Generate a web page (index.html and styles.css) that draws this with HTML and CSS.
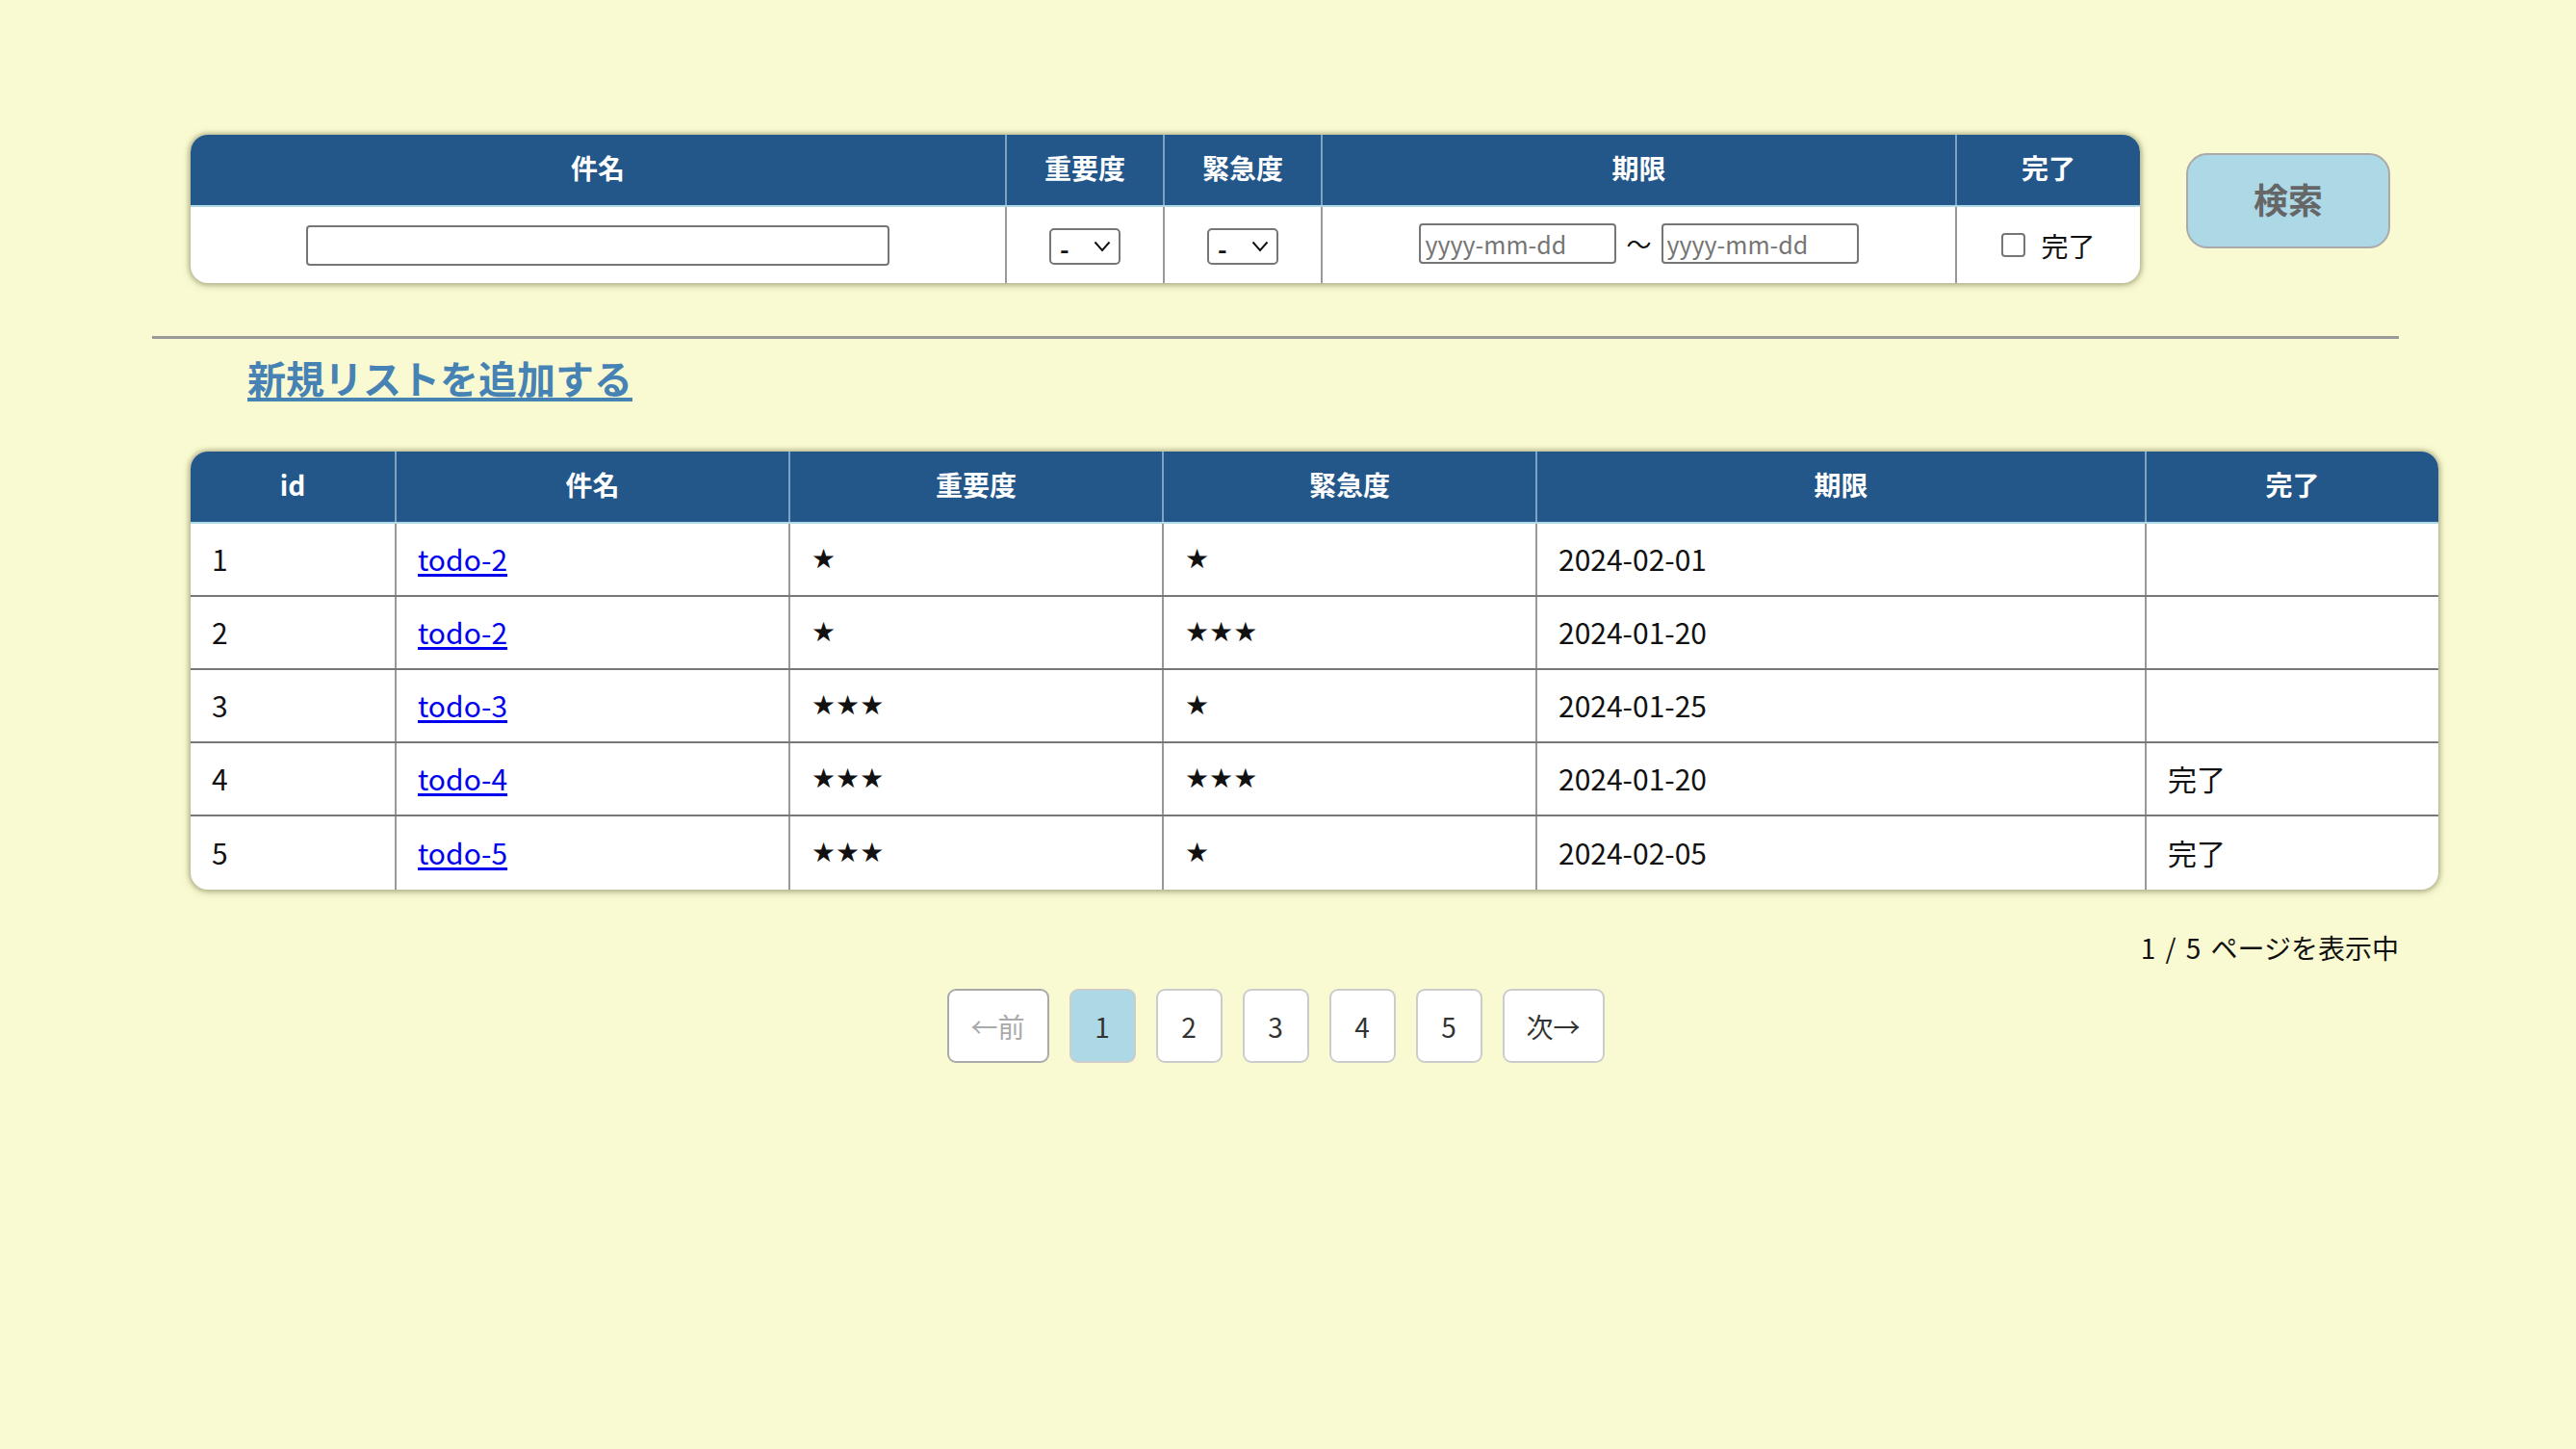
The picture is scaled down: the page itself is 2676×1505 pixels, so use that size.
FILE: index.html
```html
<!DOCTYPE html>
<html lang="ja">
<head>
<meta charset="utf-8">
<title>TODO</title>
<link rel="stylesheet" href="styles.css">
</head>
<body>
<div class="page">
  <form class="search">
    <div class="card search-card">
      <table class="grid search-table">
        <colgroup>
          <col class="c-s-name"><col class="c-s-imp"><col class="c-s-urg"><col class="c-s-date"><col class="c-s-done">
        </colgroup>
        <thead>
          <tr><th>件名</th><th>重要度</th><th>緊急度</th><th>期限</th><th>完了</th></tr>
        </thead>
        <tbody>
          <tr>
            <td class="center"><input class="text-in" type="text"></td>
            <td class="center">
              <span class="sel-wrap"><select class="sel"><option>-</option></select><svg class="chev" viewBox="0 0 18 12" width="18" height="12"><path d="M1.5 1.5 L9 10 L16.5 1.5" fill="none" stroke="#111" stroke-width="2"/></svg></span>
            </td>
            <td class="center">
              <span class="sel-wrap"><select class="sel"><option>-</option></select><svg class="chev" viewBox="0 0 18 12" width="18" height="12"><path d="M1.5 1.5 L9 10 L16.5 1.5" fill="none" stroke="#111" stroke-width="2"/></svg></span>
            </td>
            <td class="center">
              <div class="date-range">
                <input class="date-in" type="text" placeholder="yyyy-mm-dd">
                <span class="tilde">〜</span>
                <input class="date-in" type="text" placeholder="yyyy-mm-dd">
              </div>
            </td>
            <td class="center">
              <label class="check"><input class="cb" type="checkbox"><span>完了</span></label>
            </td>
          </tr>
        </tbody>
      </table>
    </div>
    <button class="search-btn" type="button">検索</button>
  </form>

  <hr class="rule">

  <a class="add-link" href="#">新規リストを追加する</a>

  <div class="card list-card">
    <table class="grid list-table">
      <colgroup>
        <col class="c-id"><col class="c-name"><col class="c-imp"><col class="c-urg"><col class="c-date"><col class="c-done">
      </colgroup>
      <thead>
        <tr><th>id</th><th>件名</th><th>重要度</th><th>緊急度</th><th>期限</th><th>完了</th></tr>
      </thead>
      <tbody>
        <tr><td>1</td><td><a href="#">todo-2</a></td><td class="stars">★</td><td class="stars">★</td><td>2024-02-01</td><td></td></tr>
        <tr><td>2</td><td><a href="#">todo-2</a></td><td class="stars">★</td><td class="stars">★★★</td><td>2024-01-20</td><td></td></tr>
        <tr><td>3</td><td><a href="#">todo-3</a></td><td class="stars">★★★</td><td class="stars">★</td><td>2024-01-25</td><td></td></tr>
        <tr><td>4</td><td><a href="#">todo-4</a></td><td class="stars">★★★</td><td class="stars">★★★</td><td>2024-01-20</td><td>完了</td></tr>
        <tr><td>5</td><td><a href="#">todo-5</a></td><td class="stars">★★★</td><td class="stars">★</td><td>2024-02-05</td><td>完了</td></tr>
      </tbody>
    </table>
  </div>

  <p class="page-info">1 / 5 ページを表示中</p>

  <nav class="pager">
    <span class="pg pg-wide pg-disabled">←前</span>
    <span class="pg pg-active">1</span>
    <a class="pg" href="#">2</a>
    <a class="pg" href="#">3</a>
    <a class="pg" href="#">4</a>
    <a class="pg" href="#">5</a>
    <a class="pg pg-wide" href="#">次→</a>
  </nav>
</div>
</body>
</html>
```

FILE: styles.css
```css
html, body {
  margin: 0;
  padding: 0;
}
body {
  background: #fafad2;
  font-family: "Noto Sans CJK JP", "Noto Sans", sans-serif;
  color: #111;
  width: 2676px;
  height: 1505px;
}
.page {
  width: 2334px;
  margin-left: 158px;
  padding-top: 140px;
}

/* ---------- cards / tables ---------- */
.card {
  border-radius: 18px;
  overflow: hidden;
  background: #fff;
  box-shadow: 0 0 4px 2px rgba(150, 150, 110, 0.55), 0 2px 10px rgba(120, 120, 80, 0.35);
}
.grid {
  border-collapse: collapse;
  table-layout: fixed;
  width: 100%;
}
.grid th {
  background: #235789;
  color: #fff;
  font-weight: bold;
  font-size: 28px;
  line-height: 36px;
  text-align: center;
  height: 68px;
  padding: 0 0 5px 0;
  border-right: 2px solid #7ea3c2;
  border-bottom: 2px solid #add8e6;
}
.grid th:last-child,
.grid td:last-child {
  border-right: none;
}
.grid td {
  font-size: 30px;
  padding: 0 0 2px 22px;
  border-right: 2px solid #999;
  border-bottom: 2px solid #777;
  height: 72px;
}
.grid tbody tr:last-child td {
  border-bottom: none;
  height: 74px;
}
.grid a {
  color: #0000ee;
  text-decoration: underline;
  text-underline-offset: 3px;
}
.grid td.stars {
  font-family: "DejaVu Sans", sans-serif;
  font-size: 28px;
}

/* ---------- search ---------- */
.search {
  display: flex;
  align-items: flex-start;
  margin: 0 0 0 40px;
}
.search-card {
  width: 2025px;
  flex: none;
}
.c-s-name { width: 847px; }
.c-s-imp { width: 164px; }
.c-s-urg { width: 164px; }
.c-s-date { width: 659px; }
.c-s-done { width: 191px; }
.search-table td {
  height: 79px;
  padding: 0;
  border-right: 2px solid #999;
}
.search-table tbody tr:last-child td {
  height: 79px;
}
.search-table td.center {
  text-align: center;
}
.text-in {
  box-sizing: border-box;
  width: 606px;
  height: 42px;
  border: 2px solid #767676;
  border-radius: 4px;
  background: #fff;
  font-size: 24px;
  vertical-align: middle;
  margin: 0 0 3px 0;
}
.sel-wrap {
  position: relative;
  display: inline-block;
  vertical-align: middle;
  margin-bottom: 3px;
}
.sel {
  appearance: none;
  -webkit-appearance: none;
  box-sizing: border-box;
  width: 74px;
  height: 38px;
  border: 2px solid #767676;
  border-radius: 5px;
  background: #fff;
  font-family: "Noto Sans CJK JP", sans-serif;
  font-size: 26px;
  font-weight: bold;
  padding: 0 0 2px 9px;
  color: #111;
  margin: 0;
  display: block;
}
.chev {
  position: absolute;
  right: 10px;
  top: 13px;
  pointer-events: none;
}
.date-range {
  display: flex;
  justify-content: center;
  align-items: center;
  gap: 10px;
  margin-bottom: 3px;
}
.date-in {
  box-sizing: border-box;
  width: 205px;
  height: 42px;
  border: 2px solid #767676;
  border-radius: 4px;
  background: #fff;
  font-family: "Noto Sans CJK JP", sans-serif;
  font-size: 25px;
  padding: 0 4px;
  margin: 0;
}
.date-in::placeholder {
  color: #757575;
}
.tilde {
  font-size: 26px;
  line-height: 1;
}
.check {
  display: inline-flex;
  align-items: center;
  gap: 16px;
  font-size: 28px;
  vertical-align: middle;
  margin-bottom: 4px;
}
.cb {
  appearance: none;
  -webkit-appearance: none;
  box-sizing: border-box;
  width: 25px;
  height: 25px;
  border: 2px solid #767676;
  border-radius: 4px;
  background: #fff;
  margin: 0;
}
.search-btn {
  flex: none;
  box-sizing: border-box;
  width: 212px;
  height: 99px;
  margin: 19px 0 0 48px;
  border: 2px solid #aaa;
  border-radius: 22px;
  background: #add8e6;
  color: #666;
  font-family: "Noto Sans CJK JP", sans-serif;
  font-weight: bold;
  font-size: 36px;
  padding: 0 0 6px 0;
}

/* ---------- rule + link ---------- */
.rule {
  border: none;
  border-top: 3px solid #9a9a9a;
  margin: 55px 0 0 0;
  height: 0;
}
.add-link {
  display: block;
  width: max-content;
  margin: 10px 0 0 99px;
  font-size: 40px;
  line-height: 60px;
  font-weight: bold;
  color: #4682b4;
  text-decoration: underline;
  text-decoration-thickness: 4px;
  text-underline-offset: 4px;
}

/* ---------- list ---------- */
.list-card {
  width: 2335px;
  margin: 47px 0 0 40px;
}
.c-id { width: 213px; }
.c-name { width: 409px; }
.c-imp { width: 388px; }
.c-urg { width: 388px; }
.c-date { width: 633px; }
.c-done { width: 304px; }

/* ---------- pager ---------- */
.page-info {
  margin: 40px 0 0 0;
  text-align: right;
  font-size: 28px;
  line-height: 40px;
  word-spacing: 4px;
  color: #111;
}
.pager {
  display: flex;
  justify-content: center;
  gap: 21px;
  margin-top: 23px;
}
.pg {
  box-sizing: border-box;
  width: 69px;
  height: 77px;
  border: 2px solid #ccc;
  border-radius: 9px;
  background: #fff;
  color: #333;
  font-size: 28px;
  text-decoration: none;
  display: flex;
  align-items: center;
  justify-content: center;
}
.pg-wide {
  width: 106px;
}
.pg-disabled {
  color: #aaa;
  border-color: #aaa;
}
.pg-active {
  background: #add8e6;
}
```
